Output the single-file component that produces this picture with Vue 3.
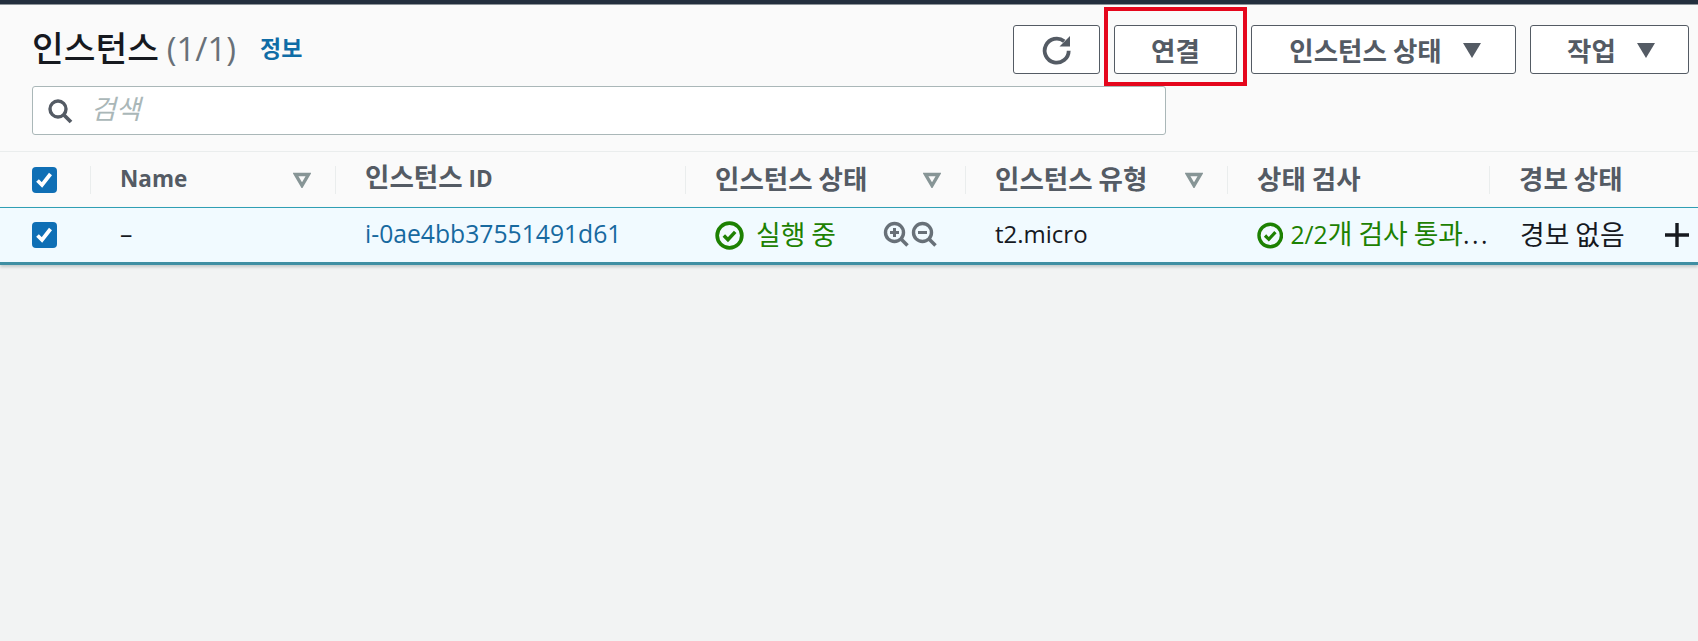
<template>
  <div class="page">
    <div class="topbar"></div>
    <section class="panel">
      <div class="toolbar">
        <div class="toolbar-top">
          <div class="title-row">
            <h1 class="title">인스턴스 <span class="count latin">(1/1)</span></h1>
            <a class="info">정보</a>
          </div>
          <div class="actions">
            <button class="btn btn-refresh">
              <svg viewBox="0 0 32 32" width="32" height="32">
                <path d="M27.7 16.7a12 12 0 1 1-4.5-9.4" fill="none" stroke="#545b64" stroke-width="3.8" />
                <path d="M29 2v10.5H18.5z" fill="#545b64" />
              </svg>
            </button>
            <button class="btn btn-connect">연결</button>
            <button class="btn btn-state">인스턴스 상태 <i class="caret"></i></button>
            <button class="btn btn-work">작업 <i class="caret"></i></button>
          </div>
        </div>
        <div class="search">
          <svg class="search-icon" viewBox="0 0 26 26" width="26" height="26">
            <circle cx="11" cy="11" r="8" fill="none" stroke="#545b64" stroke-width="3.4" />
            <path d="M17 17l7 7" stroke="#545b64" stroke-width="3.8" fill="none" />
          </svg>
          <span class="placeholder">검색</span>
        </div>
      </div>

      <div class="grid head">
        <div class="cell check-cell">
          <span class="check">
            <svg viewBox="0 0 24 26" width="24" height="26"><path d="M5.5 13.5l4.5 4.5 8.5-11" fill="none" stroke="#fff" stroke-width="3.8" /></svg>
          </span>
        </div>
        <div v-for="col in columns" :key="col.label + col.latin" class="cell head-cell" :class="{ 'no-line': col.last }">
          <span>{{ col.label }}<span v-if="col.latin" class="latin">{{ col.latin }}</span></span>
          <svg v-if="col.sort" class="sort" viewBox="0 0 18 16" width="18" height="16">
            <path d="M2.5 2.5h13L9 13.5z" fill="none" stroke="#879596" stroke-width="3.4" />
          </svg>
        </div>
      </div>

      <div class="grid row">
        <div class="cell check-cell">
          <span class="check">
            <svg viewBox="0 0 24 26" width="24" height="26"><path d="M5.5 13.5l4.5 4.5 8.5-11" fill="none" stroke="#fff" stroke-width="3.8" /></svg>
          </span>
        </div>
        <div class="cell body-cell"><span class="latin">–</span></div>
        <div class="cell body-cell"><a class="link latin">i-0ae4bb37551491d61</a></div>
        <div class="cell body-cell state-cell">
          <span class="status">
            <svg class="ok" viewBox="0 0 28 28" width="29" height="29">
              <circle cx="14" cy="14" r="11.9" fill="none" stroke="#1d8102" stroke-width="3.6" />
              <path d="M8.5 14l4 4 7-7.5" fill="none" stroke="#1d8102" stroke-width="3.4" />
            </svg>
            <span class="status-text">실행 중</span>
          </span>
          <span class="zooms">
            <svg viewBox="0 0 26 26" width="26" height="26">
              <circle cx="11.5" cy="11.5" r="9" fill="none" stroke="#687078" stroke-width="3.4" />
              <path d="M18 18l6.5 6.5" stroke="#687078" stroke-width="3.6" />
              <path d="M7 11.5h9M11.5 7v9" stroke="#687078" stroke-width="3" />
            </svg>
            <svg viewBox="0 0 26 26" width="26" height="26">
              <circle cx="11.5" cy="11.5" r="9" fill="none" stroke="#687078" stroke-width="3.4" />
              <path d="M18 18l6.5 6.5" stroke="#687078" stroke-width="3.6" />
              <path d="M7 11.5h9" stroke="#687078" stroke-width="3" />
            </svg>
          </span>
        </div>
        <div class="cell body-cell"><span class="latin micro">t2.micro</span></div>
        <div class="cell body-cell checks-cell">
          <svg class="ok" viewBox="0 0 28 28" width="29" height="29">
            <circle cx="14" cy="14" r="11.9" fill="none" stroke="#1d8102" stroke-width="3.6" />
            <path d="M8.5 14l4 4 7-7.5" fill="none" stroke="#1d8102" stroke-width="3.4" />
          </svg>
          <span class="checks-text"><span class="latin">2/2</span>개 검사 통과<span class="more latin">...</span></span>
        </div>
        <div class="cell body-cell alarm-cell">
          <span>경보 없음</span>
          <svg class="plus" viewBox="0 0 26 26" width="26" height="26">
            <path d="M13 1v24M1 13h24" stroke="#16191f" stroke-width="3.4" />
          </svg>
        </div>
      </div>
    </section>
  </div>
</template>

<script setup>
const columns = [
  { label: '', latin: 'Name', sort: true },
  { label: '인스턴스 ', latin: 'ID', sort: false },
  { label: '인스턴스 상태', sort: true },
  { label: '인스턴스 유형', sort: true },
  { label: '상태 검사', sort: false },
  { label: '경보 상태', sort: false, last: true }
]
</script>

<style>
html,
body {
  margin: 0;
  background: #f2f3f3;
}
</style>

<style scoped>
.page {
  height: 641px;
  overflow: hidden;
  background: #f2f3f3;
  font-family: "Noto Sans CJK KR", "Noto Sans", sans-serif;
  color: #16191f;
}

.topbar {
  height: 4px;
  background: #232f3e;
  border-bottom: 1px solid #8d9499;
}

.panel {
  background: #fafafa;
}

.toolbar {
  height: 147px;
  box-sizing: border-box;
  padding: 20px 9px 0 32px;
  border-bottom: 1px solid #eaeded;
}

.toolbar-top {
  display: flex;
  justify-content: space-between;
  height: 61px;
}

.title-row {
  display: flex;
  align-items: center;
  height: 44px;
}

.title {
  margin: 0;
  font-size: 34.5px;
  font-weight: 500;
  line-height: 44px;
}

.count {
  font-size: 33px;
  font-weight: 400;
  color: #687078;
}

.info {
  margin-left: 24px;
  font-size: 23px;
  font-weight: 700;
  color: #0f6ca6;
}

.search {
  display: flex;
  align-items: center;
  width: 1134px;
  height: 49px;
  box-sizing: border-box;
  padding-left: 14px;
  background: #fff;
  border: 1px solid #aab7b8;
  border-radius: 3px;
}

.placeholder {
  margin-left: 18px;
  font-size: 27px;
  line-height: 40px;
  margin-top: -6px;
  font-style: italic;
  color: #aab7b8;
}

.latin {
  font-family: "Open Sans", "Noto Sans", sans-serif;
}

.actions {
  display: flex;
  gap: 14px;
}

.btn {
  position: relative;
  display: flex;
  align-items: center;
  justify-content: center;
  height: 49px;
  padding: 0;
  background: #fff;
  border: 1px solid #545b64;
  border-radius: 3px;
  font: 700 26.5px "Noto Sans CJK KR", sans-serif;
  color: #545b64;
}

.btn-refresh { width: 87px; }
.btn-connect { width: 123px; }
.btn-state { width: 265px; }
.btn-work { width: 159px; }

/* annotation drawn over the screenshot */
.btn-connect::after {
  content: "";
  position: absolute;
  inset: -19px -11px -13px -11px;
  border: 4px solid #e5061c;
  pointer-events: none;
}

.caret {
  width: 0;
  height: 0;
  margin-left: 21px;
  margin-right: -3px;
  margin-top: 2px;
  border-left: 9px solid transparent;
  border-right: 9px solid transparent;
  border-top: 15px solid #545b64;
}

.grid {
  display: grid;
  grid-template-columns: 91px 245px 350px 280px 262px 262px 208px;
}

.head {
  height: 55px;
  align-items: center;
}

.row {
  height: 58px;
  box-sizing: border-box;
  align-items: center;
  background: #f1faff;
  border-top: 1px solid #2f9fb4;
  border-bottom: 3px solid #3f8fa3;
  box-shadow: 0 2px 3px rgba(0, 28, 36, 0.2);
}

.cell {
  display: flex;
  align-items: center;
  min-width: 0;
  box-sizing: border-box;
}

.check-cell {
  padding-left: 32px;
  height: 28px;
}

.head .check-cell,
.head-cell {
  border-right: 1px solid #eaeded;
}

.head-cell {
  justify-content: space-between;
  height: 28px;
  padding: 0 24px 0 29px;
  font-size: 26.5px;
  line-height: 28px;
  font-weight: 700;
  color: #545b64;
}

.head-cell .latin {
  font-size: 22.5px;
  font-weight: 700;
}

.head-cell > span {
  margin-top: -4px;
}

.head-cell.no-line {
  border-right: 0;
}

.check {
  display: flex;
  width: 25px;
  height: 26px;
  background: #0f6fb5;
  border-radius: 4px;
}

.sort {
  flex: none;
}

.body-cell {
  padding-left: 29px;
  font-size: 26.8px;
  line-height: 32px;
  color: #16191f;
}

.body-cell .latin {
  font-size: 24.7px;
  margin-top: -3px;
}

.body-cell .micro {
  font-size: 24px;
}

.link {
  color: #17699f;
}

.state-cell {
  justify-content: space-between;
  padding-right: 28px;
}

.status {
  display: flex;
  align-items: center;
  gap: 12px;
  color: #1d8102;
}

.status-text {
  margin-top: -3px;
}

.zooms {
  display: flex;
  gap: 2px;
  margin-top: -2px;
  margin-right: 1px;
}

.checks-cell {
  gap: 7px;
  white-space: nowrap;
  color: #1d8102;
}

.checks-text {
  margin-top: -3px;
}

.more {
  color: #16191f;
  letter-spacing: 2.5px;
}

.alarm-cell {
  justify-content: space-between;
  padding-right: 8px;
  padding-left: 30px;
}

.alarm-cell > span {
  margin-top: -3px;
}
</style>
